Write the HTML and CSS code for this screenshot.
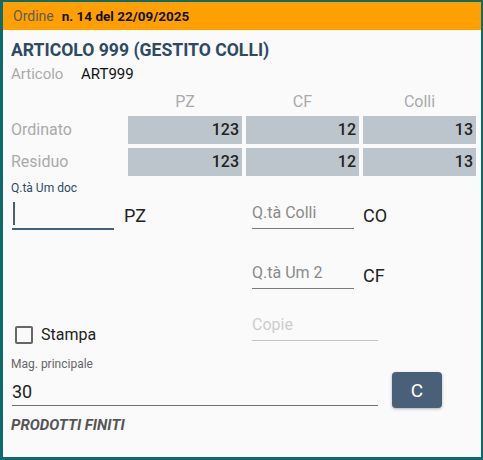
FILE: index.html
```html
<!DOCTYPE html>
<html lang="it">
<head>
<meta charset="utf-8">
<title>Articolo</title>
<link rel="stylesheet" href="styles.css">
</head>
<body>
<div class="frame">
  <div class="header">
    <span class="h-label">Ordine</span>
    <span class="h-value">n. 14 del 22/09/2025</span>
  </div>
  <div class="content">
    <div class="title">ARTICOLO 999 (GESTITO COLLI)</div>
    <div class="art-row">
      <span class="art-label">Articolo</span>
      <span class="art-value">ART999</span>
    </div>
    <div class="qty-grid">
      <div></div>
      <div class="col-head">PZ</div>
      <div class="col-head">CF</div>
      <div class="col-head">Colli</div>
      <div class="row-label">Ordinato</div>
      <div class="cell">123</div>
      <div class="cell">12</div>
      <div class="cell">13</div>
      <div class="row-label">Residuo</div>
      <div class="cell">123</div>
      <div class="cell">12</div>
      <div class="cell">13</div>
    </div>
    <div class="small-label blue">Q.tà Um doc</div>
    <div class="form-row row-a">
      <div class="half">
        <div class="field active"><span class="cursor"></span></div>
        <span class="unit">PZ</span>
      </div>
      <div class="half right">
        <div class="field"><span class="hint">Q.tà Colli</span></div>
        <span class="unit">CO</span>
      </div>
    </div>
    <div class="form-row row-b">
      <div class="half"></div>
      <div class="half right">
        <div class="field"><span class="hint">Q.tà Um 2</span></div>
        <span class="unit">CF</span>
      </div>
    </div>
    <div class="form-row row-c">
      <div class="half">
        <label class="check"><span class="box"></span><span class="check-text">Stampa</span></label>
      </div>
      <div class="half right">
        <div class="field wide disabled"><span class="hint light">Copie</span></div>
      </div>
    </div>
    <div class="small-label gray mag-label">Mag. principale</div>
    <div class="mag-row">
      <div class="field mag"><span class="value">30</span></div>
      <button class="btn">C</button>
    </div>
    <div class="desc">PRODOTTI FINITI</div>
  </div>
</div>
</body>
</html>
```

FILE: styles.css
```css
* { box-sizing: border-box; }
html, body {
  margin: 0;
  padding: 0;
  background: #0e6b6b;
}
body {
  font-family: Roboto, "Noto Sans", sans-serif;
  width: 483px;
  height: 460px;
}
.frame {
  width: 483px;
  height: 460px;
  border-style: solid;
  border-color: #0e6b6b;
  border-width: 2px 2px 3px 3px;
  background: #fafafa;
}
.header {
  height: 28px;
  background: #ffa000;
  display: flex;
  align-items: center;
  padding-left: 10px;
  gap: 8px;
  font-size: 14px;
}
.h-label { color: #5c5c5c; }
.h-value { color: #111; font-weight: 700; font-size: 13.5px; }
.content {
  padding: 0 4px 0 8px;
}
.title {
  margin-top: 10px;
  font-size: 17.6px;
  line-height: 20px;
  font-weight: 700;
  color: #2e4a63;
  letter-spacing: 0;
}
.art-row {
  margin-top: 4px;
  line-height: 20px;
  font-size: 15px;
  display: flex;
}
.art-label { color: #aaa; width: 70px; }
.art-value { color: #111; }
.qty-grid {
  margin-top: 8px;
  display: grid;
  grid-template-columns: 113px 114px 113px 113px;
  grid-template-rows: 20px 28px 28px;
  column-gap: 4px;
  row-gap: 4px;
}
.col-head {
  text-align: center;
  color: #aaa;
  font-size: 16px;
  line-height: 20px;
}
.row-label {
  color: #aaa;
  font-size: 16px;
  line-height: 28px;
}
.cell {
  background: #bcc5cb;
  text-align: right;
  padding-right: 3px;
  font-size: 16px;
  font-weight: 500;
  line-height: 28px;
  color: #222;
}
.small-label {
  font-size: 12px;
  line-height: 14px;
}
.small-label.blue { color: #2e4a63; margin-top: 5px; }
.small-label.gray { color: #666; }
.form-row {
  display: flex;
  align-items: flex-start;
}
.row-a { margin-top: 0; }
.row-b { margin-top: 25px; }
.row-c { margin-top: 18px; }
.half {
  width: 241px;
  display: flex;
  align-items: flex-start;
}
.half.right { width: auto; }
.field {
  width: 102px;
  height: 34px;
  border-bottom: 1px solid #7a7a7a;
  padding-top: 8px;
  line-height: 20px;
  font-size: 16px;
}
.field.active {
  margin-left: 1px;
  height: 35px;
  border-bottom: 2px solid #45607a;
  padding-top: 7px;
  padding-left: 1px;
}
.cursor {
  display: block;
  width: 2px;
  height: 23px;
  background: #45607a;
}
.field.wide { width: 126px; }
.field.disabled { border-bottom-color: #c4c4c4; }
.hint { color: #8a8a8a; }
.hint.light { color: #cdcdcd; }
.unit {
  margin-top: 11px;
  margin-left: 9px;
  font-size: 18px;
  line-height: 20px;
  color: #222;
}
.half:first-child .unit { margin-left: 10px; }
.check {
  display: flex;
  align-items: center;
  height: 36px;
  margin-left: 4px;
  padding-top: 19px;
}
.box {
  width: 18px;
  height: 18px;
  border: 2px solid #666;
  border-radius: 2px;
}
.check-text {
  margin-left: 8px;
  font-size: 16px;
  color: #222;
}
.mag-label { margin-top: 14px; }
.mag-row {
  margin-top: 1px;
  display: flex;
  align-items: flex-start;
}
.field.mag {
  margin-left: 1px;
  width: 366px;
  height: 34px;
  padding-top: 10px;
  border-bottom-color: #6f6f6f;
}
.value { font-size: 18px; color: #222; }
.btn {
  margin-left: 14px;
  width: 50px;
  height: 36px;
  border: none;
  border-radius: 4px;
  background: #4a6078;
  color: #fff;
  font-family: Roboto, sans-serif;
  font-size: 19px;
  box-shadow: 0 1px 3px rgba(0,0,0,0.3);
  padding: 0;
}
.desc {
  margin-top: 8px;
  font-size: 15px;
  line-height: 18px;
  font-weight: 700;
  font-style: italic;
  color: #555;
}
```
